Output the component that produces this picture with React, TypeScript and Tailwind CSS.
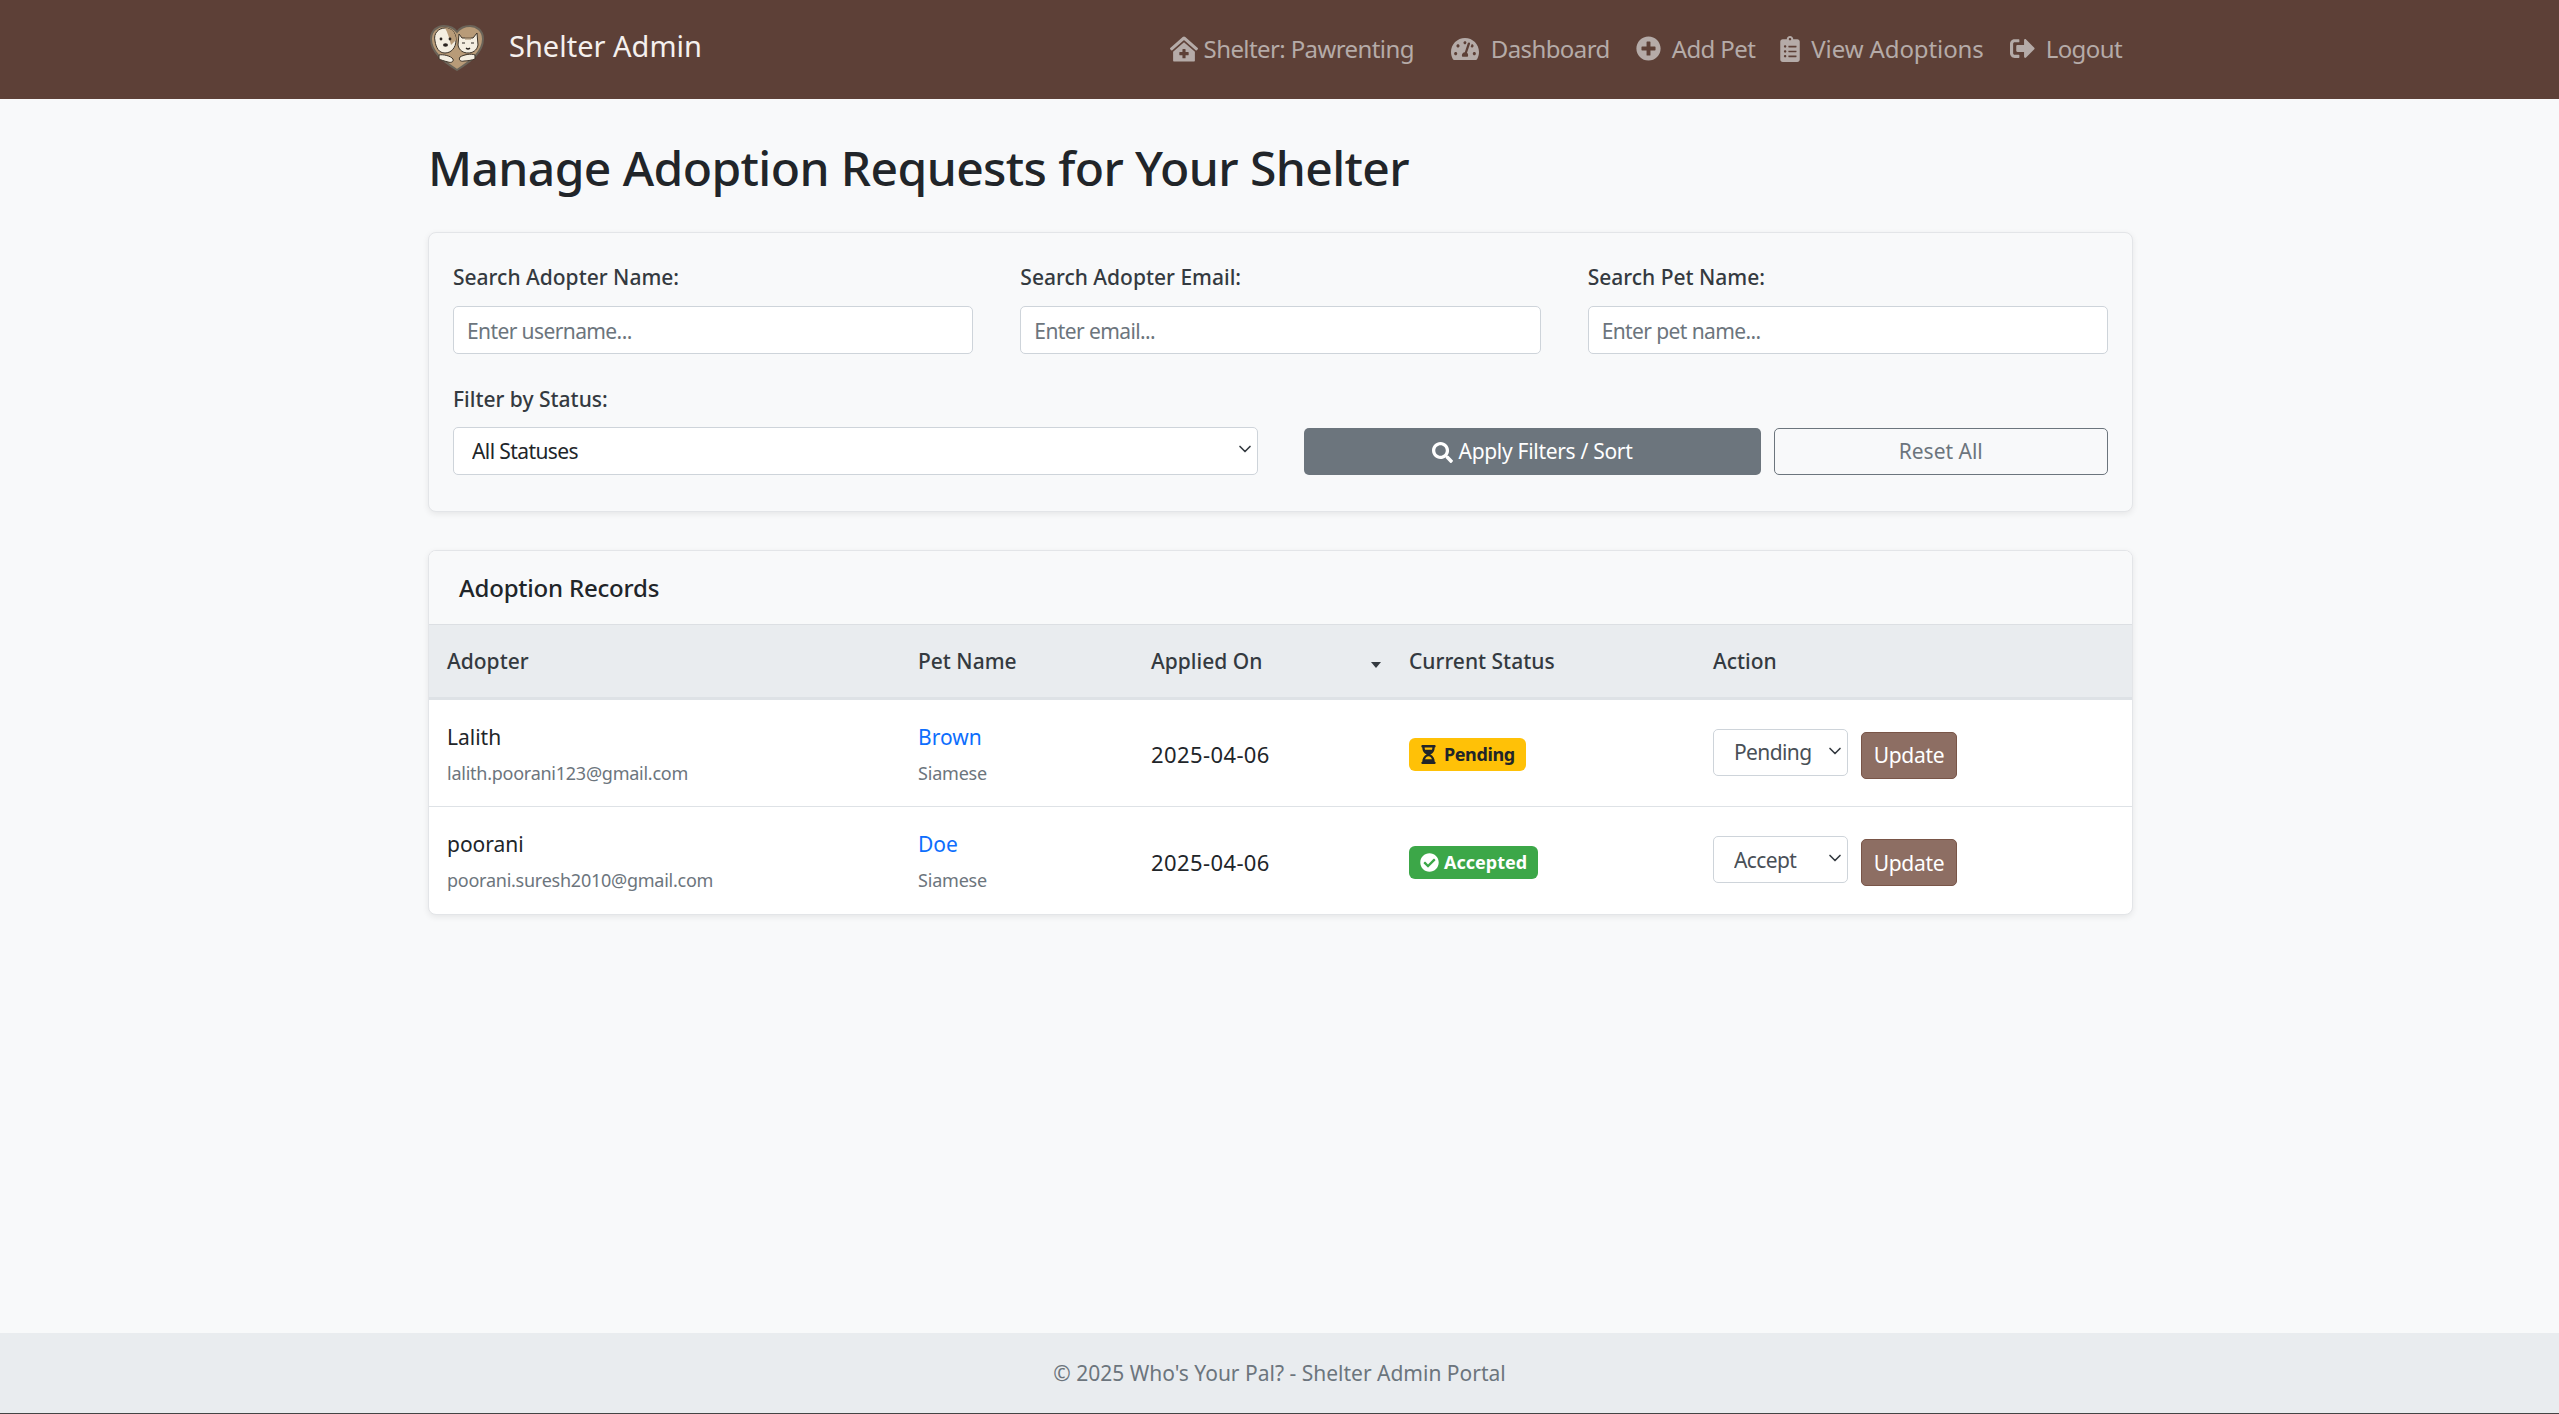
import { ChevronDown } from 'lucide-react';
import { FaClinicMedical, FaTachometerAlt, FaPlusCircle, FaClipboardList, FaSignOutAlt, FaSearch, FaHourglassHalf, FaCheckCircle } from 'react-icons/fa';

const font = "font-['Noto_Sans','Open_Sans',sans-serif]";

function Logo() {
  return (
    <svg viewBox="0 0 56 48" className="h-[48px] w-[56px]">
      <path d="M28 46 C14 37 2 28 2 15 C2 6 9 2 15 2 C21 2 25 4 28 8 C31 4 35 2 41 2 C47 2 54 6 54 15 C54 28 42 37 28 46Z" fill="#b89b78" stroke="#6b6459" strokeWidth="2" />
      <path d="M6 17 C4 9 10 4 16 4 C22 4 27 8 27 16 C27 24 22 29 16 29 C10 29 7 24 6 17Z" fill="#f4eee1" stroke="#3b3228" strokeWidth="1" />
      <path d="M16 4 C22 4 27 8 27 16 L22 21 C20 14 19 9 16 4Z" fill="#b89b78" />
      <circle cx="12" cy="15" r="1.4" fill="#2b2420" />
      <circle cx="21" cy="15" r="1.4" fill="#2b2420" />
      <ellipse cx="16.500" cy="21" rx="2.500" ry="1.800" fill="#2b2420" />
      <path d="M30 10 L33 14 H44 L48 9 L49 21 C48 27 43 29 39 29 C35 29 30 27 29 21Z" fill="#f4eee1" stroke="#3b3228" strokeWidth="1" />
      <path d="M33 19 L36 19 M42 19 L45 19 M37 24 Q39 26 41 24" stroke="#2b2420" strokeWidth="1.200" fill="none" />
      <path d="M37 13 V16 M39 13 V16 M41 13 V16" stroke="#a88a66" strokeWidth="1" />
      <path d="M10 31 C14 30 22 32 24 35 C25 38 22 39 19 38 C15 37 12 36 10 35Z" fill="#f4eee1" stroke="#3b3228" strokeWidth="1" />
      <path d="M46 31 C42 29 34 31 31 33 C29 36 32 38 35 37 C39 37 43 36 46 35Z" fill="#f4eee1" stroke="#3b3228" strokeWidth="1" />
    </svg>
  );
}

const navItems = [
  { label: 'Shelter: Pawrenting', icon: FaClinicMedical, cls: 'gap-[6px]', iconCls: 'text-[28px]' },
  { label: 'Dashboard', icon: FaTachometerAlt, cls: 'ml-[37px] gap-[12px]', iconCls: 'text-[28px]' },
  { label: 'Add Pet', icon: FaPlusCircle, cls: 'ml-[26px] gap-[11px]', iconCls: 'text-[25px]' },
  { label: 'View Adoptions', icon: FaClipboardList, cls: 'ml-[25px] gap-[11px] tracking-[-0.1px]', iconCls: 'h-[26px] w-[20px]' },
  { label: 'Logout', icon: FaSignOutAlt, cls: 'ml-[26px] gap-[11px]', iconCls: 'text-[25px]' },
];

const inputCls =
  'h-[48px] w-full rounded-[5px] border border-[#ced4da] bg-white px-[13px] pt-[2px] text-[21px] tracking-[-0.6px] text-[#212529] placeholder:text-[#6c757d] outline-none';

const labelCls = 'block text-[21px] font-medium leading-[32px] text-[#343a40]';

const records = [
  { name: 'Lalith', email: 'lalith.poorani123@gmail.com', pet: 'Brown', status: 'Pending', action: 'Pending' },
  { name: 'poorani', email: 'poorani.suresh2010@gmail.com', pet: 'Doe', status: 'Accepted', action: 'Accept' },
];

export default function App() {
  return (
    <div className={`flex min-h-[1414px] flex-col border-b border-[#444] bg-[#f8f9fa] text-[#212529] ${font}`}>
      <nav className="h-[99px] bg-[#5d4037]">
        <div className="ml-[428px] flex h-full w-[1705px] items-center">
          <div className="flex items-center">
            <div className="ml-[1px] mt-[-4px]"><Logo /></div>
            <span className="ml-[24px] mt-[-8px] text-[29px] text-[#f5f0ee]">Shelter Admin</span>
          </div>
          <div className="ml-auto mr-[11px] mt-[-2px] flex items-center text-[24px] tracking-[-0.6px] text-[#b5aba8]">
            {navItems.map((item) => (
              <a key={item.label} className={`flex items-center ${item.cls}`}>
                <item.icon className={item.iconCls} />
                {item.label}
              </a>
            ))}
          </div>
        </div>
      </nav>

      <main className="ml-[428px] w-[1705px] flex-1">
        <h2 className="mt-[39px] text-[48px] font-medium leading-[60px] tracking-[-0.6px]">Manage Adoption Requests for Your Shelter</h2>

        <section className="mt-[34px] h-[280px] rounded-[8px] border border-[#e3e5e8] bg-[#f8f9fa] px-[24px] pt-[28px] shadow-[0_2px_6px_rgba(0,0,0,0.08)]">
          <div className="grid grid-cols-3 gap-x-[47px]">
            <div>
              <label className={`${labelCls} mb-[13px]`}>Search Adopter Name:</label>
              <input className={inputCls} placeholder="Enter username..." />
            </div>
            <div>
              <label className={`${labelCls} mb-[13px]`}>Search Adopter Email:</label>
              <input className={inputCls} placeholder="Enter email..." />
            </div>
            <div>
              <label className={`${labelCls} mb-[13px]`}>Search Pet Name:</label>
              <input className={inputCls} placeholder="Enter pet name..." />
            </div>
          </div>
          <div className="mt-[29px] grid grid-cols-2 gap-x-[46px]">
            <div>
              <label className={`${labelCls} mb-[12px]`}>Filter by Status:</label>
              <div className="relative">
                <select className={`${inputCls} appearance-none pl-[18px] text-[#343a40] tracking-[-0.4px]`}>
                  <option>All Statuses</option>
                </select>
                <ChevronDown className="pointer-events-none absolute right-[3px] top-[12px] size-[20px] text-[#343a40]" />
              </div>
            </div>
            <div className="flex items-end gap-[13px]">
              <button className="flex h-[47px] w-[457px] items-center justify-center gap-[6px] rounded-[5px] bg-[#6c757d] pt-[1px] text-[21px] tracking-[-0.3px] text-white">
                <FaSearch className="text-[21px]" />
                Apply Filters / Sort
              </button>
              <button className="h-[47px] flex-1 rounded-[5px] border border-[#6c757d] pt-[1px] text-[21px] text-[#6c757d]">Reset All</button>
            </div>
          </div>
        </section>

        <section className="mt-[38px] overflow-hidden rounded-[8px] border border-[#e3e5e8] bg-white shadow-[0_2px_6px_rgba(0,0,0,0.08)]">
          <div className="flex h-[74px] items-center border-b border-[#dcdfe3] bg-[#f8f9fa] pl-[30px] text-[24px] font-medium tracking-[-0.2px]">Adoption Records</div>
          <table className="w-full table-fixed border-collapse text-left">
            <colgroup>
              <col className="w-[470px]" />
              <col className="w-[233px]" />
              <col className="w-[258px]" />
              <col className="w-[304px]" />
              <col />
            </colgroup>
            <thead>
              <tr className="h-[73px] border-b-[3px] border-[#dee2e6] bg-[#e9ecef] text-[21px] font-medium text-[#343a40]">
                <th className="pl-[18px] pt-[2px] font-medium">Adopter</th>
                <th className="pl-[19px] pt-[2px] font-medium">Pet Name</th>
                <th className="relative pl-[19px] pt-[2px] font-medium">
                  Applied On
                  <span className="absolute right-[9px] top-[37px] border-x-[5px] border-t-[6px] border-x-transparent border-t-[#343a40]" />
                </th>
                <th className="pl-[19px] pt-[2px] font-medium">Current Status</th>
                <th className="pl-[19px] pt-[2px] font-medium">Action</th>
              </tr>
            </thead>
            <tbody>
              {records.map((r, i) => (
                <tr key={r.name} className={i === 0 ? 'h-[108px] border-b border-[#dee2e6]' : 'h-[108px]'}>
                  <td className="pl-[18px] pt-[2px]">
                    <div className="text-[21px] leading-[32px]">{r.name}</div>
                    <div className="mt-[6px] text-[18px] leading-[28px] tracking-[-0.25px] text-[#6c757d]">{r.email}</div>
                  </td>
                  <td className="pl-[19px] pt-[2px]">
                    <a className="block text-[21px] leading-[32px] text-[#0d6efd]">{r.pet}</a>
                    <div className="mt-[6px] text-[18px] leading-[28px] tracking-[-0.2px] text-[#6c757d]">Siamese</div>
                  </td>
                  <td className="pl-[19px] pt-[4px] text-[22px] tracking-[0.4px]">2025-04-06</td>
                  <td className="pl-[19px] pt-[4px]">
                    {r.status === 'Pending' ? (
                      <span className="inline-flex h-[33px] items-center gap-[6px] rounded-[6px] bg-[#ffc107] pl-[10px] pr-[11px] text-[18px] font-bold tracking-[-0.4px] text-[#212529]">
                        <FaHourglassHalf className="text-[19px]" />
                        Pending
                      </span>
                    ) : (
                      <span className="inline-flex h-[33px] items-center gap-[5px] rounded-[6px] bg-[#3ca748] px-[11px] text-[18px] font-bold text-white">
                        <FaCheckCircle className="text-[19px]" />
                        Accepted
                      </span>
                    )}
                  </td>
                  <td className="pl-[19px] pt-[2px]">
                    <div className="flex items-start gap-[13px]">
                      <div className="relative">
                        <select defaultValue={r.action} className="h-[47px] w-[135px] appearance-none rounded-[5px] border border-[#ced4da] bg-white pl-[20px] pt-[2px] text-[21px] tracking-[-0.6px] text-[#495057]">
                          <option>Pending</option>
                          <option>Accept</option>
                        </select>
                        <ChevronDown className="pointer-events-none absolute right-[3px] top-[12px] size-[20px] text-[#343a40]" />
                      </div>
                      <button className="mt-[3px] h-[47px] w-[96px] rounded-[5px] border border-[#795548] bg-[#8d6e63] pt-[2px] text-[21px] tracking-[-0.3px] text-white">Update</button>
                    </div>
                  </td>
                </tr>
              ))}
            </tbody>
          </table>
        </section>
      </main>

      <footer className="flex h-[80px] items-center justify-center bg-[#e9ecef] pt-[2px] text-[21px] text-[#6c757d]">© 2025 Who's Your Pal? - Shelter Admin Portal</footer>
    </div>
  );
}
